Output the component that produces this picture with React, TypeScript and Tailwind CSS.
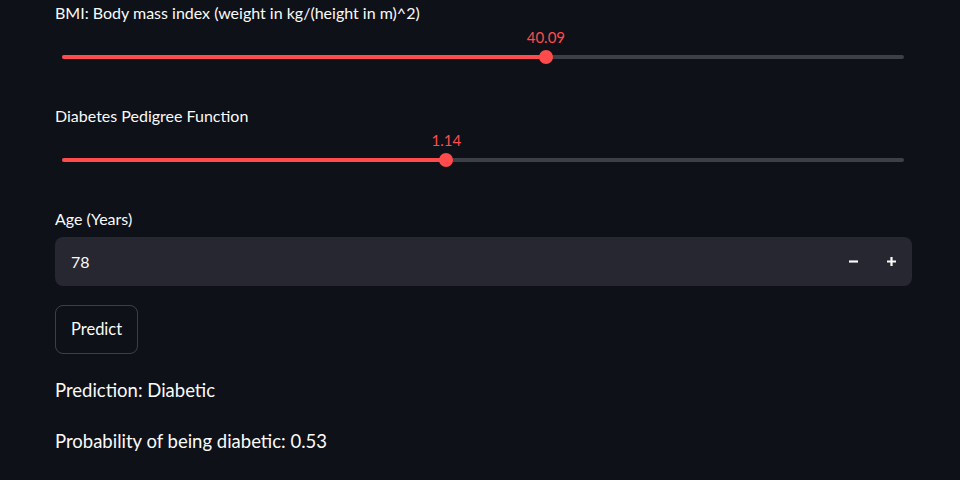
import React from "react";

const font = { fontFamily: '"Lato", "Noto Sans", sans-serif' };

type SliderProps = { label: string; value: string; pct: number };

function Slider({ label, value, pct }: SliderProps) {
  return (
    <div className="flex flex-col">
      <div className="text-[16px] leading-[21px] text-[#fafafa]">{label}</div>
      <div className="relative h-[48px] mx-[7px]">
        {/* value bubble sits over the track */}
        <div
          className="absolute top-[4px] -translate-x-1/2 text-[15px] leading-[20px] text-[#ff4b4b]"
          style={{ left: `${pct}%` }}
        >
          {value}
        </div>
        <div className="absolute left-0 right-[1px] top-[32px] h-[4px] rounded-full bg-[#3d4047]">
          <div className="h-full rounded-full bg-[#ff4b4b]" style={{ width: `${pct}%` }} />
        </div>
        <div
          className="absolute top-[27px] h-[14px] w-[14px] -translate-x-1/2 rounded-full bg-[#ff4b4b]"
          style={{ left: `${pct}%` }}
        />
      </div>
    </div>
  );
}

export default function App() {
  return (
    <div className="min-h-[480px] w-full bg-[#0e1117] text-[#fafafa]" style={font}>
      <div className="flex flex-col pl-[55px] pr-[48px] pt-[2px]">
        <Slider label="BMI: Body mass index (weight in kg/(height in m)^2)" value="40.09" pct={57.4} />
        <div className="mt-[34px]">
          <Slider label="Diabetes Pedigree Function" value="1.14" pct={45.6} />
        </div>

        <div className="mt-[34px] text-[16px] leading-[21px]">Age (Years)</div>
        <div className="mt-[8px] flex h-[49px] items-center rounded-lg bg-[#262730] pl-[16px] pr-[6px]">
          <span className="flex-1 text-[16px]">78</span>
          <button className="flex h-[30px] w-[30px] items-center justify-center">
            <svg width="11" height="11" viewBox="0 0 11 11">
              <path d="M1 5.5h9" stroke="#fafafa" strokeWidth="2.2" />
            </svg>
          </button>
          <button className="ml-[8px] flex h-[30px] w-[30px] items-center justify-center">
            <svg width="11" height="11" viewBox="0 0 11 11">
              <path d="M1 5.5h9M5.5 1v9" stroke="#fafafa" strokeWidth="2.2" />
            </svg>
          </button>
        </div>

        <div className="mt-[19px]">
          <button className="h-[49px] rounded-lg border border-[rgba(250,250,250,0.2)] px-[15px] text-[16.5px] text-[#fafafa]">
            Predict
          </button>
        </div>

        <div className="mt-[24px] text-[18.5px] leading-[24px]">Prediction: Diabetic</div>
        <div className="mt-[27px] text-[18.5px] leading-[24px]">Probability of being diabetic: 0.53</div>
      </div>
    </div>
  );
}
